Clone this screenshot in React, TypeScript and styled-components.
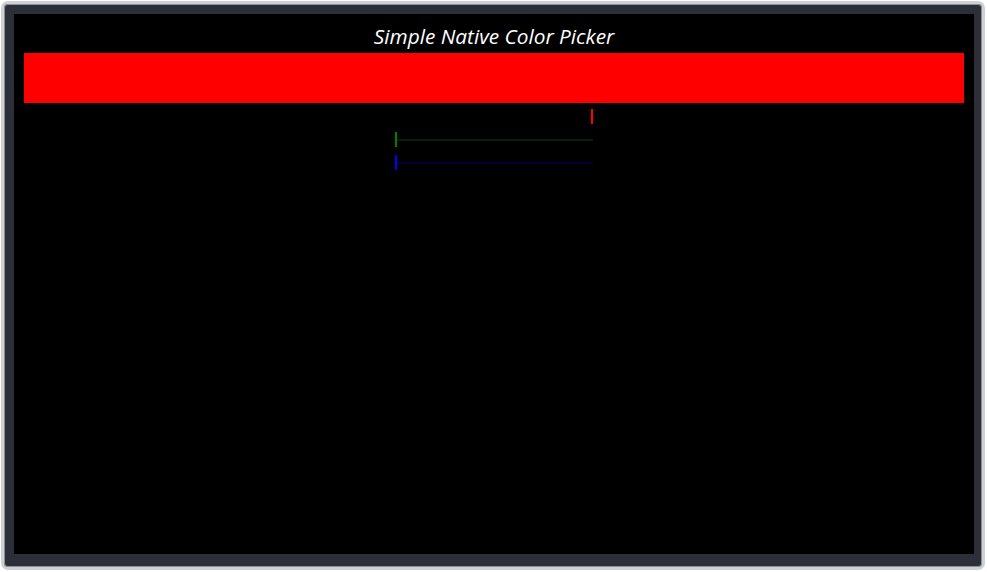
import React, { useState } from "react";
import styled, { createGlobalStyle } from "styled-components";

const Global = createGlobalStyle`
  html, body { margin: 0; padding: 0; background: #ffffff; }
  body { width: 987px; height: 572px; overflow: hidden; }
`;

const Frame = styled.div`
  box-sizing: border-box;
  margin: 1px 0 0 1px;
  width: 984px;
  height: 569px;
  border: 3px solid #cfd0d3;
  border-radius: 7px;
  background: #2c2f38;
  padding: 10px 8px 13px 10px;
  box-shadow: inset 0 0 0 1px #8d9097;
`;

const Screen = styled.div`
  width: 960px;
  height: 540px;
  background: #000000;
  display: flex;
  flex-direction: column;
  align-items: center;
`;

const Title = styled.h1`
  margin: 9px 0 0;
  font-family: "Open Sans", "Noto Sans", sans-serif;
  font-style: italic;
  font-weight: 400;
  font-size: 20.8px;
  line-height: 26px;
  color: #ffffff;
`;

const Swatch = styled.div<{ $color: string }>`
  margin-top: 4px;
  width: 940px;
  height: 50px;
  background: ${(p) => p.$color};
`;

const Sliders = styled.div`
  margin-top: 6px;
  display: flex;
  flex-direction: column;
  gap: 8px;
`;

const Range = styled.input<{ $thumb: string; $track: string }>`
  -webkit-appearance: none;
  appearance: none;
  display: block;
  margin: 0;
  padding: 0;
  width: 198px;
  height: 15px;
  background: transparent;
  outline: none;

  &::-webkit-slider-runnable-track {
    height: 2px;
    background: ${(p) => p.$track};
  }
  &::-webkit-slider-thumb {
    -webkit-appearance: none;
    appearance: none;
    width: 2px;
    height: 15px;
    margin-top: -6.5px;
    background: ${(p) => p.$thumb};
    border: none;
  }
`;

export default function App() {
  const [r, setR] = useState(255);
  const [g, setG] = useState(0);
  const [b, setB] = useState(0);
  return (
    <>
      <Global />
      <Frame>
        <Screen>
          <Title>Simple Native Color Picker</Title>
          <Swatch $color={`rgb(${r}, ${g}, ${b})`} />
          <Sliders>
            <Range
              type="range"
              min={0}
              max={255}
              value={r}
              onChange={(e) => setR(Number(e.target.value))}
              $thumb="#ff0000"
              $track="#000000"
            />
            <Range
              type="range"
              min={0}
              max={255}
              value={g}
              onChange={(e) => setG(Number(e.target.value))}
              $thumb="#008000"
              $track="#002400"
            />
            <Range
              type="range"
              min={0}
              max={255}
              value={b}
              onChange={(e) => setB(Number(e.target.value))}
              $thumb="#0000ff"
              $track="#00003a"
            />
          </Sliders>
        </Screen>
      </Frame>
    </>
  );
}
